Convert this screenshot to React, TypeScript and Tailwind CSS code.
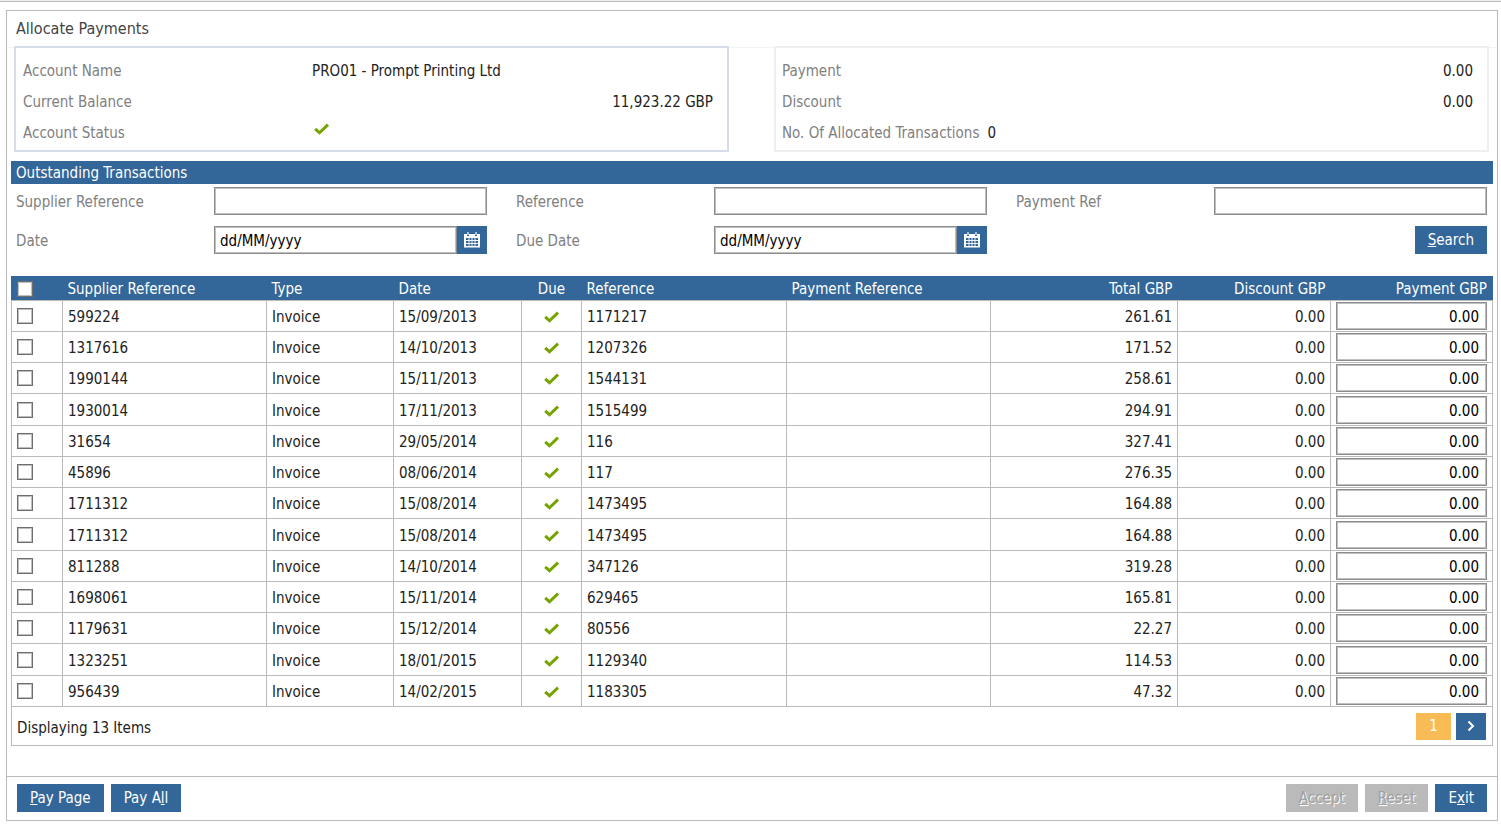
import { useState } from "react"
import type { ReactNode } from "react"

type Transaction = {
  id: number
  supplierRef: string
  date: string
  reference: string
  total: string
}

const transactions: Transaction[] = [
  { id: 1, supplierRef: "599224", date: "15/09/2013", reference: "1171217", total: "261.61" },
  { id: 2, supplierRef: "1317616", date: "14/10/2013", reference: "1207326", total: "171.52" },
  { id: 3, supplierRef: "1990144", date: "15/11/2013", reference: "1544131", total: "258.61" },
  { id: 4, supplierRef: "1930014", date: "17/11/2013", reference: "1515499", total: "294.91" },
  { id: 5, supplierRef: "31654", date: "29/05/2014", reference: "116", total: "327.41" },
  { id: 6, supplierRef: "45896", date: "08/06/2014", reference: "117", total: "276.35" },
  { id: 7, supplierRef: "1711312", date: "15/08/2014", reference: "1473495", total: "164.88" },
  { id: 8, supplierRef: "1711312", date: "15/08/2014", reference: "1473495", total: "164.88" },
  { id: 9, supplierRef: "811288", date: "14/10/2014", reference: "347126", total: "319.28" },
  { id: 10, supplierRef: "1698061", date: "15/11/2014", reference: "629465", total: "165.81" },
  { id: 11, supplierRef: "1179631", date: "15/12/2014", reference: "80556", total: "22.27" },
  { id: 12, supplierRef: "1323251", date: "18/01/2015", reference: "1129340", total: "114.53" },
  { id: 13, supplierRef: "956439", date: "14/02/2015", reference: "1183305", total: "47.32" }
]

function Tick() {
  return (
    <svg viewBox="0 0 16 12" className="w-4 h-3" fill="none" stroke="#76a300" strokeWidth="3">
      <path d="M1.2 5.8 L5.5 9.8 L14 1.6" />
    </svg>
  )
}

function CalendarIcon() {
  return (
    <svg viewBox="0 0 16 16" className="size-4" fill="none">
      <path d="M0 2h3v2h2V2h6v2h2V2h3v13.5H0z" fill="#fff" />
      <path d="M4 0v3M12 0v3" stroke="#fff" strokeWidth="1.2" />
      <path d="M2 6h12v8H2z" fill="#336699" />
      <path d="M2 8.5h12M2 11.5h12M5 6v8M8 6v8M11 6v8" stroke="#fff" strokeWidth="0.9" />
    </svg>
  )
}

function Button({ children, disabled }: { children: ReactNode; disabled?: boolean }) {
  return (
    <button
      disabled={disabled}
      className="h-7 px-[13px] bg-[#336699] text-white disabled:bg-[#bababa] disabled:text-[#a0a0a0] disabled:[text-shadow:1px_1px_0_#fff]"
    >
      {children}
    </button>
  )
}

const inputBorder = "border border-[#8c8c8c] shadow-[inset_0_0_0_1px_#c0c0c0]"
const checkbox = "block size-4 appearance-none bg-white border border-[#6e6e6e] shadow-[inset_0_0_0_1px_#bdbdbd] checked:bg-[#336699]"

function Field({ id, label }: { id: string; label: string }) {
  return (
    <div className="flex items-center">
      <label htmlFor={id} className="w-[198px] pt-[2px] text-[#808080]">{label}</label>
      <input id={id} type="text" className={`flex-1 min-w-0 h-7 px-[5px] bg-white ${inputBorder}`} />
    </div>
  )
}

function DateField({ id, label }: { id: string; label: string }) {
  return (
    <div className="flex items-center">
      <label htmlFor={id} className="w-[198px] pt-[2px] text-[#808080]">{label}</label>
      <input
        id={id}
        type="text"
        defaultValue="dd/MM/yyyy"
        className={`flex-1 min-w-0 h-7 px-[5px] pt-[2px] bg-white text-black ${inputBorder}`}
      />
      <button aria-label={`Pick ${label}`} className="w-[30px] h-7 flex items-center justify-center bg-[#336699]">
        <CalendarIcon />
      </button>
    </div>
  )
}

export default function App() {
  const [selected, setSelected] = useState<number[]>([])

  const toggle = (id: number) => {
    setSelected(selected.includes(id) ? selected.filter((x) => x !== id) : [...selected, id])
  }

  const toggleAll = () => {
    setSelected(selected.length === transactions.length ? [] : transactions.map((t) => t.id))
  }

  return (
    <div className="bg-white text-[15px] leading-5 text-[#222] font-['DejaVu_Sans_Condensed',Tahoma,sans-serif]">
      <div className="h-[2px] bg-[#efefef] border-b border-[#bababa]" />

      <main className="mt-2 ml-[6px] mr-[3px] border border-[#bababa]">
        <h1 className="h-9 pl-[9px] pt-2 text-base leading-5 text-[#444]">Allocate Payments</h1>

        {/* Account summary */}
        <div className="border-t border-[#f3f3f3] pl-[7px] pr-2 pb-[9px] grid grid-cols-2 gap-[45px]">
          <dl className="h-[106px] -mt-[2px] pl-[7px] pr-[14px] pt-[13px] border-2 border-[#d6dde8] grid grid-cols-[289px_1fr] auto-rows-[31px]">
            <dt className="text-[#808080]">Account Name</dt>
            <dd>PRO01 - Prompt Printing Ltd</dd>
            <dt className="text-[#808080]">Current Balance</dt>
            <dd className="text-right">11,923.22 GBP</dd>
            <dt className="text-[#808080]">Account Status</dt>
            <dd className="pl-[2px]"><Tick /></dd>
          </dl>
          <dl className="h-[106px] -mt-[2px] pl-[6px] pr-[14px] pt-[13px] border-2 border-[#eee] grid grid-cols-[auto_1fr] gap-x-2 auto-rows-[31px]">
            <dt className="text-[#808080]">Payment</dt>
            <dd className="text-right">0.00</dd>
            <dt className="text-[#808080]">Discount</dt>
            <dd className="text-right">0.00</dd>
            <dt className="text-[#808080]">No. Of Allocated Transactions</dt>
            <dd>0</dd>
          </dl>
        </div>

        <section className="mx-1">
          <h2 className="h-[23px] pl-[5px] pt-[2px] bg-[#336699] text-white">Outstanding Transactions</h2>

          {/* Filters */}
          <form className="pt-[3px] pl-[5px] pr-[6px] grid grid-cols-3 gap-x-[29px] gap-y-[11px]" onSubmit={(e) => e.preventDefault()}>
            <Field id="supplierRef" label="Supplier Reference" />
            <Field id="reference" label="Reference" />
            <Field id="paymentRef" label="Payment Ref" />
            <DateField id="date" label="Date" />
            <DateField id="dueDate" label="Due Date" />
            <div className="text-right">
              <Button><u>S</u>earch</Button>
            </div>
          </form>

          <table className="mt-[22px] w-full table-fixed border-collapse">
            <colgroup>
              <col className="w-[51px]" />
              <col className="w-[204px]" />
              <col className="w-[127px]" />
              <col className="w-[128px]" />
              <col className="w-[60px]" />
              <col className="w-[205px]" />
              <col className="w-[204px]" />
              <col className="w-[187px]" />
              <col className="w-[153px]" />
              <col className="w-[162px]" />
            </colgroup>
            <thead>
              <tr className="h-6 bg-[#336699] text-white text-left border border-[#336699] [&>th]:font-normal [&>th]:px-[5px]">
                <th>
                  <input
                    type="checkbox"
                    aria-label="Select all"
                    className={checkbox}
                    checked={selected.length === transactions.length}
                    onChange={toggleAll}
                  />
                </th>
                <th>Supplier Reference</th>
                <th>Type</th>
                <th>Date</th>
                <th className="text-center">Due</th>
                <th>Reference</th>
                <th>Payment Reference</th>
                <th className="text-right">Total GBP</th>
                <th className="text-right">Discount GBP</th>
                <th className="text-right">Payment GBP</th>
              </tr>
            </thead>
            <tbody className="[&_td]:border [&_td]:border-[#bababa] [&_td]:px-[5px]">
              {transactions.map((t) => (
                <tr key={t.id} className="h-[31px] [&:nth-child(4n)]:h-8 [&>td]:pt-[2px] [&>td:first-child]:pt-0 [&>td:last-child]:pt-0">
                  <td>
                    <input
                      type="checkbox"
                      aria-label={`Select ${t.supplierRef}`}
                      className={checkbox}
                      checked={selected.includes(t.id)}
                      onChange={() => toggle(t.id)}
                    />
                  </td>
                  <td>{t.supplierRef}</td>
                  <td>Invoice</td>
                  <td>{t.date}</td>
                  <td>
                    <div className="flex justify-center"><Tick /></div>
                  </td>
                  <td>{t.reference}</td>
                  <td></td>
                  <td className="text-right">{t.total}</td>
                  <td className="text-right">0.00</td>
                  <td>
                    <input
                      type="text"
                      aria-label={`Payment for ${t.supplierRef}`}
                      defaultValue="0.00"
                      className={`block w-full h-7 px-[7px] pt-[2px] bg-white text-black text-right ${inputBorder}`}
                    />
                  </td>
                </tr>
              ))}
            </tbody>
          </table>

          {/* Pager */}
          <div className="h-[39px] pl-[5px] pr-[6px] flex items-center justify-between border border-t-0 border-[#bababa]">
            <span className="pt-[3px]">Displaying 13 Items</span>
            <div className="flex gap-[5px]">
              <button className="w-[35px] h-[27px] bg-[#f8bb55] text-white">1</button>
              <button aria-label="Next page" className="w-[30px] h-[27px] flex items-center justify-center bg-[#336699]">
                <svg viewBox="0 0 8 12" className="w-2 h-3" fill="none" stroke="#fff" strokeWidth="2">
                  <path d="M1.5 1.5 L6 6 L1.5 10.5" />
                </svg>
              </button>
            </div>
          </div>
        </section>

        {/* Actions */}
        <footer className="mt-[30px] pt-[7px] pb-2 px-[10px] flex gap-[7px] border-t border-[#bababa]">
          <Button><u>P</u>ay Page</Button>
          <Button>Pay A<u>l</u>l</Button>
          <div className="ml-auto flex gap-[7px]">
            <Button disabled><u>A</u>ccept</Button>
            <Button disabled><u>R</u>eset</Button>
            <Button>E<u>x</u>it</Button>
          </div>
        </footer>
      </main>
    </div>
  )
}
